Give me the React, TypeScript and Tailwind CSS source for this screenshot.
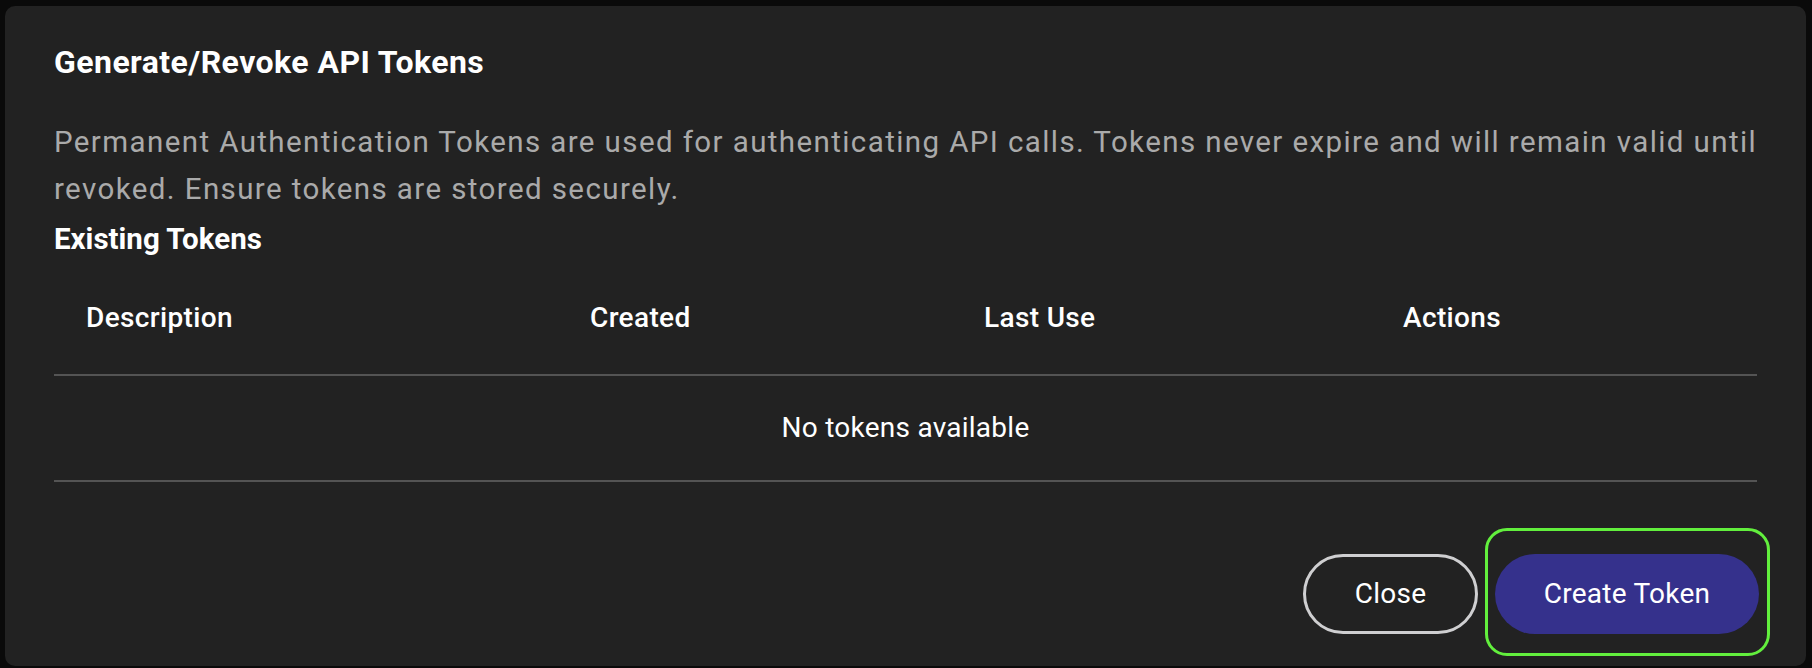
const columns = ["Description", "Created", "Last Use", "Actions"];

const TokenTable = () => {
  return (
    <div className="w-full">
      <div className="grid h-[114px] grid-cols-[504px_394px_419px_1fr] items-center border-b-2 border-[#545454]">
        {columns.map((label) => (
          <div
            key={label}
            className="pl-[32px] text-[28px] font-medium leading-[36px] tracking-[0.35px] text-white"
          >
            {label}
          </div>
        ))}
      </div>
      <div className="flex h-[106px] items-center justify-center border-b-2 border-[#545454] text-[28px] leading-[36px] tracking-[0.25px] text-white">
        No tokens available
      </div>
    </div>
  );
};

export default function App() {
  return (
    <div className="h-screen w-full bg-[#0a0a0a] pl-[5px] pr-[6px] pt-[6px] pb-[2px] font-['Roboto',_'Liberation_Sans',_sans-serif]">
      <div className="flex h-full flex-col rounded-[10px] bg-[#222222] px-[49px] pt-[36px] pb-[32px]">
        <h2 className="text-[32px] font-bold leading-[40px] tracking-[0.45px] text-white">
          Generate/Revoke API Tokens
        </h2>
        <p className="mt-[37px] mr-[-30px] text-[29.5px] leading-[47px] tracking-[1.4px] text-[#aaaaaa]">
          Permanent Authentication Tokens are used for authenticating API calls.
          Tokens never expire and will remain valid until revoked. Ensure tokens
          are stored securely.
        </p>
        <h3 className="mt-[3px] text-[29.5px] font-bold leading-[46px] text-white">
          Existing Tokens
        </h3>

        <TokenTable />

        <div className="mt-auto mr-[-2px] flex justify-end gap-[17px]">
          <button className="h-[80px] w-[175px] rounded-full border-[3px] border-[#cfcfd1] text-[28px] leading-none tracking-[0.25px] text-white">
            Close
          </button>
          <div className="relative">
            <button className="h-[80px] w-[264px] rounded-full bg-[#35318c] text-[28px] leading-none tracking-[0.25px] text-white">
              Create Token
            </button>
            <div className="pointer-events-none absolute -top-[26px] -bottom-[22px] -left-[10px] -right-[11px] rounded-[22px] border-[3px] border-[#62ef3d]" />
          </div>
        </div>
      </div>
    </div>
  );
}
